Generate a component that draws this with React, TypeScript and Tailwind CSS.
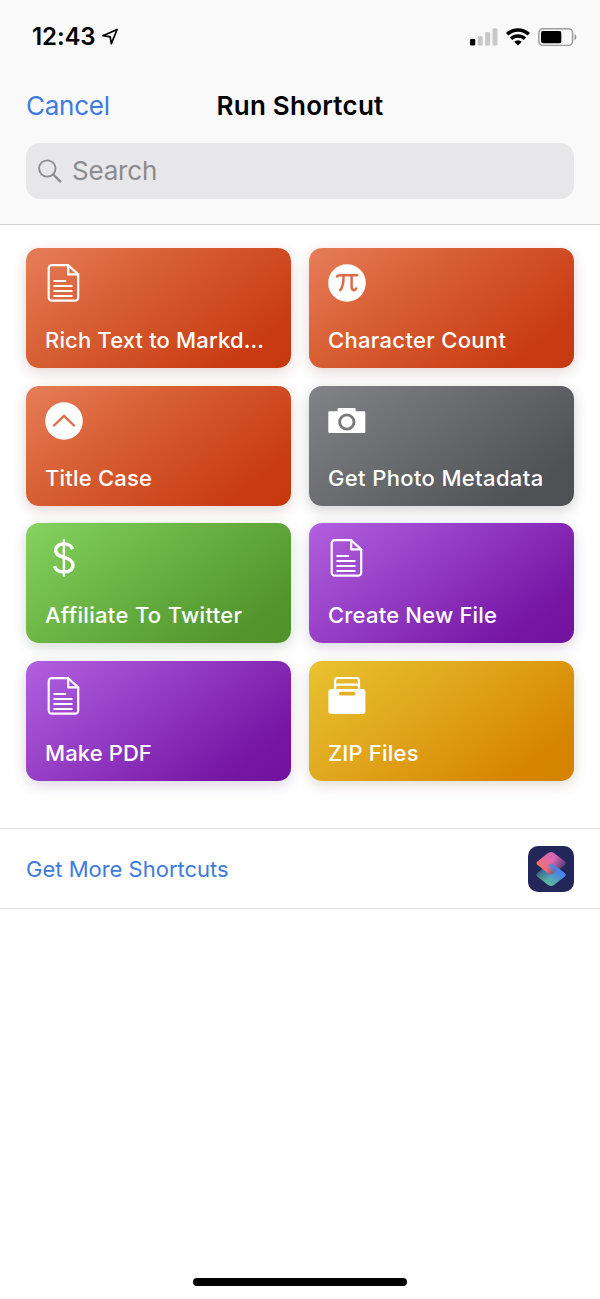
import React from "react";
import clsx from "clsx";

type IconName = "document" | "pi" | "chevron" | "camera" | "dollar" | "archive";

interface Shortcut {
  title: string;
  icon: IconName;
  card: string;
  // colour of the parts cut out of a solid glyph
  cutout: string;
  tracking: string;
}

const ORANGE =
  "bg-[linear-gradient(142deg,#e67e59_0%,#d85f34_36%,#c93b12_85%,#c63810_100%)] shadow-[0_4px_14px_rgba(110,45,25,0.2)]";
const GRAY =
  "bg-[linear-gradient(142deg,#828387_0%,#6a6b6e_42%,#505155_85%,#4f5054_100%)] shadow-[0_4px_14px_rgba(40,40,50,0.22)]";
const GREEN =
  "bg-[linear-gradient(142deg,#85d360_0%,#6cb646_38%,#52952d_85%,#50932c_100%)] shadow-[0_4px_14px_rgba(40,70,30,0.2)]";
const PURPLE =
  "bg-[linear-gradient(142deg,#b160e0_0%,#963fc6_38%,#7614a4_84%,#73129f_100%)] shadow-[0_4px_14px_rgba(80,35,100,0.2)]";
const YELLOW =
  "bg-[linear-gradient(142deg,#e8c32f_0%,#e0a71e_40%,#d78500_84%,#d38300_100%)] shadow-[0_4px_14px_rgba(100,75,25,0.2)]";

const shortcuts: Shortcut[] = [
  { title: "Rich Text to Markd...", icon: "document", card: ORANGE, cutout: "text-[#dd6b43]", tracking: "tracking-[0.15px]" },
  { title: "Character Count", icon: "pi", card: ORANGE, cutout: "text-[#dd6b43]", tracking: "tracking-[0.32px]" },
  { title: "Title Case", icon: "chevron", card: ORANGE, cutout: "text-[#dd6b43]", tracking: "tracking-[0.2px]" },
  { title: "Get Photo Metadata", icon: "camera", card: GRAY, cutout: "text-[#77787b]", tracking: "tracking-[0.36px]" },
  { title: "Affiliate To Twitter", icon: "dollar", card: GREEN, cutout: "text-[#79c554]", tracking: "tracking-[0.33px]" },
  { title: "Create New File", icon: "document", card: PURPLE, cutout: "text-[#a451d4]", tracking: "tracking-[0.2px]" },
  { title: "Make PDF", icon: "document", card: PURPLE, cutout: "text-[#a451d4]", tracking: "tracking-[0.1px]" },
  { title: "ZIP Files", icon: "archive", card: YELLOW, cutout: "text-[#e3b127]", tracking: "tracking-[0.2px]" },
];

function ShortcutIcon({ name, cutout }: { name: IconName; cutout: string }) {
  return (
    <svg viewBox="0 0 38 38" fill="none" className={clsx("h-[38px] w-[38px]", cutout)}>
      {name === "document" && (
        <g stroke="white" strokeWidth="2.2" strokeLinecap="round" strokeLinejoin="round">
          <path d="M6.7 1.2H23.2l10 9.2v23.3a3 3 0 0 1-3 3H6.7a3 3 0 0 1-3-3V4.2a3 3 0 0 1 3-3Z" />
          <path d="M23.2 1.2v9.2h10" />
          <path d="M9.3 17h11M9.3 22h17.4M9.3 27h17.4M9.3 32h17.4" />
        </g>
      )}
      {name === "pi" && (
        <>
          <circle cx="19" cy="19" r="18.8" fill="white" />
          <g stroke="currentColor" strokeWidth="2.5" strokeLinecap="round" strokeLinejoin="round">
            <path d="M9 12.4c.7-.9 1.7-1.2 3.2-1.2H29.3" />
            <path d="M15.6 11.2c0 7-.6 12-3.4 15" />
            <path d="M23.6 11.2v11.3c0 4.2 3.4 4.6 4.6 2" />
          </g>
        </>
      )}
      {name === "chevron" && (
        <>
          <circle cx="19" cy="19" r="18.8" fill="white" />
          <path d="M9 23.5 19 14l10 9.5" stroke="currentColor" strokeWidth="2.4" strokeLinecap="round" />
        </>
      )}
      {name === "camera" && (
        <>
          <path
            d="M1.3 9.2H9.5V7.5a1.4 1.4 0 0 1 1.4-1.4H26.3A1.4 1.4 0 0 1 27.7 7.5v1.7h8.4a1.2 1.2 0 0 1 1.2 1.2V30a1 1 0 0 1-1 1H1.3a1 1 0 0 1-1-1V10.2a1 1 0 0 1 1-1Z"
            fill="white"
          />
          <circle cx="18.8" cy="20" r="7.2" stroke="currentColor" strokeWidth="2.8" />
        </>
      )}
      {name === "dollar" && (
        <g stroke="white">
          <path
            d="M27.6 10.3C26.5 6.7 23 4.9 18.9 4.9c-5 0-8.2 2.6-8.2 6.4 0 4.5 3.6 5.8 8.2 7 5.1 1.3 9.1 2.9 9.1 7.6 0 4.4-3.6 7-9.1 7-4.8 0-8.2-1.9-9.4-5.7"
            strokeWidth="3.4"
          />
          <path d="M18.9.3v37.4" strokeWidth="2.4" />
        </g>
      )}
      {name === "archive" && (
        <>
          <path
            d="M7.1 15V4A3 3 0 0 1 10.1 1H28a3 3 0 0 1 3 3V15M7.1 10.2q0-2.6 2.6-2.6H28.4q2.6 0 2.6 2.6"
            stroke="white"
            strokeWidth="2.2"
          />
          <rect x=".4" y="12" width="37" height="25.1" rx="3" fill="white" />
          <rect x="11" y="14.8" width="16.5" height="3.8" rx="1.9" fill="currentColor" />
        </>
      )}
    </svg>
  );
}

function StatusBar() {
  return (
    <div className="flex h-[74px] items-center justify-between pl-[32px] pr-[23px]">
      <div className="flex items-center gap-[6px]">
        <span className="text-[24px] font-semibold leading-none tracking-[-0.1px]">12:43</span>
        <svg viewBox="0 0 18 18" fill="none" className="h-[18px] w-[18px]">
          <path
            d="M1 7.7 15.1 1.5 9.3 15.7 8.2 8.8Z"
            stroke="black"
            strokeWidth="1.7"
            strokeLinejoin="round"
          />
        </svg>
      </div>
      <div className="flex items-center">
        <svg viewBox="0 0 28 18" className="h-[18px] w-[28px]">
          <rect x="0" y="11" width="5.2" height="6.5" rx="1.2" fill="black" />
          <rect x="7.7" y="8" width="5" height="9.5" rx="1.2" fill="#c8c8c8" />
          <rect x="15.2" y="4" width="5" height="13.5" rx="1.2" fill="#c8c8c8" />
          <rect x="22.5" y="0.3" width="5" height="17.2" rx="1.2" fill="#c8c8c8" />
        </svg>
        <svg viewBox="0 0 24 18" fill="none" className="ml-[8px] h-[18px] w-[24px]">
          <g stroke="black" strokeWidth="3.5">
            <path d="M1.2 6.3a15.6 15.6 0 0 1 21.6 0" />
            <path d="M5.1 10.7a10 10 0 0 1 13.8 0" />
          </g>
          <path d="M12 17.4 8.2 13.8a5.4 5.4 0 0 1 7.6 0Z" fill="black" />
        </svg>
        <svg viewBox="0 0 39 18" fill="none" className="ml-[8px] h-[18px] w-[39px]">
          <rect x=".8" y=".8" width="33.8" height="16.6" rx="4.2" stroke="#9b9b9b" strokeWidth="1.5" />
          <rect x="3" y="3" width="20.3" height="12.2" rx="2" fill="black" />
          <path d="M36.6 6v6.2c2.2-1 2.2-5.2 0-6.2Z" fill="#8e8e8e" />
        </svg>
      </div>
    </div>
  );
}

function ShortcutsLogo() {
  return (
    <svg viewBox="0 0 46 46" className="h-[46px] w-[46px]">
      <defs>
        <linearGradient id="top" x1="0.1" y1="0.8" x2="0.85" y2="0.1">
          <stop offset="0" stopColor="#f4735a" />
          <stop offset="0.6" stopColor="#dd69b0" />
          <stop offset="1" stopColor="#c765b8" />
        </linearGradient>
        <linearGradient id="topShade" x1="0.55" y1="0.4" x2="1" y2="0.65">
          <stop offset="0" stopColor="#222658" stopOpacity="0" />
          <stop offset="1" stopColor="#222658" stopOpacity="0.75" />
        </linearGradient>
        <linearGradient id="bottom" x1="0.25" y1="0.9" x2="0.8" y2="0.2">
          <stop offset="0" stopColor="#5fc08c" />
          <stop offset="0.5" stopColor="#539dc8" />
          <stop offset="1" stopColor="#3f7df0" />
        </linearGradient>
        <linearGradient id="bottomShade" x1="0" y1="0.3" x2="0.45" y2="0.65">
          <stop offset="0" stopColor="#222658" stopOpacity="0.6" />
          <stop offset="1" stopColor="#222658" stopOpacity="0" />
        </linearGradient>
        {/* blue tile fades in over the lower right of the pink one */}
        <linearGradient id="blueOverlap" x1="0.48" y1="0.4" x2="0.72" y2="0.24">
          <stop offset="0" stopColor="#4c8fe0" stopOpacity="0" />
          <stop offset="1" stopColor="#4486ec" />
        </linearGradient>
        <path
          id="tile"
          d="M20 7 9.6 15.3q-2.2 1.8 0 3.6L20 27.2q3 2.2 6 0l10.4-8.3q2.2-1.8 0-3.6L26 7q-3-2.2-6 0Z"
        />
      </defs>
      <rect width="46" height="46" rx="10" fill="#222658" />
      <g transform="translate(0 11.8)">
        <use href="#tile" fill="url(#bottom)" />
        <use href="#tile" fill="url(#bottomShade)" />
      </g>
      <use href="#tile" fill="url(#top)" />
      <use href="#tile" fill="url(#topShade)" />
      <use href="#tile" transform="translate(0 11.8)" fill="url(#blueOverlap)" />
    </svg>
  );
}

function ShortcutCard({ shortcut }: { shortcut: Shortcut }) {
  return (
    <button
      className={clsx(
        "flex h-[120px] flex-col items-start justify-between rounded-[13px] pb-[15px] pl-[19px] pt-4 text-left text-white",
        shortcut.card
      )}
    >
      <ShortcutIcon name={shortcut.icon} cutout={shortcut.cutout} />
      <span className={clsx("whitespace-nowrap text-[22px] font-medium leading-[26px]", shortcut.tracking)}>
        {shortcut.title}
      </span>
    </button>
  );
}

export default function App() {
  return (
    <div className="flex h-[1299px] w-[600px] flex-col bg-white font-['Inter',sans-serif] text-black">
      <header className="h-[225px] border-b border-[#d2d2d4] bg-[#f9f9f9]">
        <StatusBar />
        <div className="grid h-[63px] grid-cols-[1fr_auto_1fr] items-center px-[26px]">
          <button className="text-left text-[26px] tracking-[-0.25px] text-[#3d7be3]">Cancel</button>
          <h1 className="text-[26px] font-semibold tracking-[0.25px]">Run Shortcut</h1>
        </div>
        <div className="mx-[26px] mt-[6px] flex h-[56px] items-center gap-[9px] rounded-[14px] bg-[#e7e7e9] pl-3 text-[#8b8b90]">
          <svg viewBox="0 0 25 25" fill="none" className="h-[25px] w-[25px]" stroke="currentColor">
            <circle cx="9.3" cy="9.5" r="8.2" strokeWidth="1.8" />
            <path d="m15.3 15.5 6.9 6.9" strokeWidth="2.4" strokeLinecap="round" />
          </svg>
          <span className="pb-[2px] text-[26px] tracking-[-0.2px]">Search</span>
        </div>
      </header>

      <main className="grid grid-cols-2 gap-x-[18px] gap-y-[17.5px] px-[26px] pb-[47px] pt-[23px]">
        {shortcuts.map((shortcut) => (
          <ShortcutCard key={shortcut.title} shortcut={shortcut} />
        ))}
      </main>

      <div className="flex h-[81px] items-center justify-between border-y border-[#e0e0e1] px-[26px] pt-px">
        <button className="pt-[2px] text-[22px] text-[#3d7bdc]">Get More Shortcuts</button>
        <ShortcutsLogo />
      </div>

      {/* Home indicator */}
      <div className="mx-auto mb-[13px] mt-auto h-[8px] w-[214px] rounded-full bg-black" />
    </div>
  );
}
